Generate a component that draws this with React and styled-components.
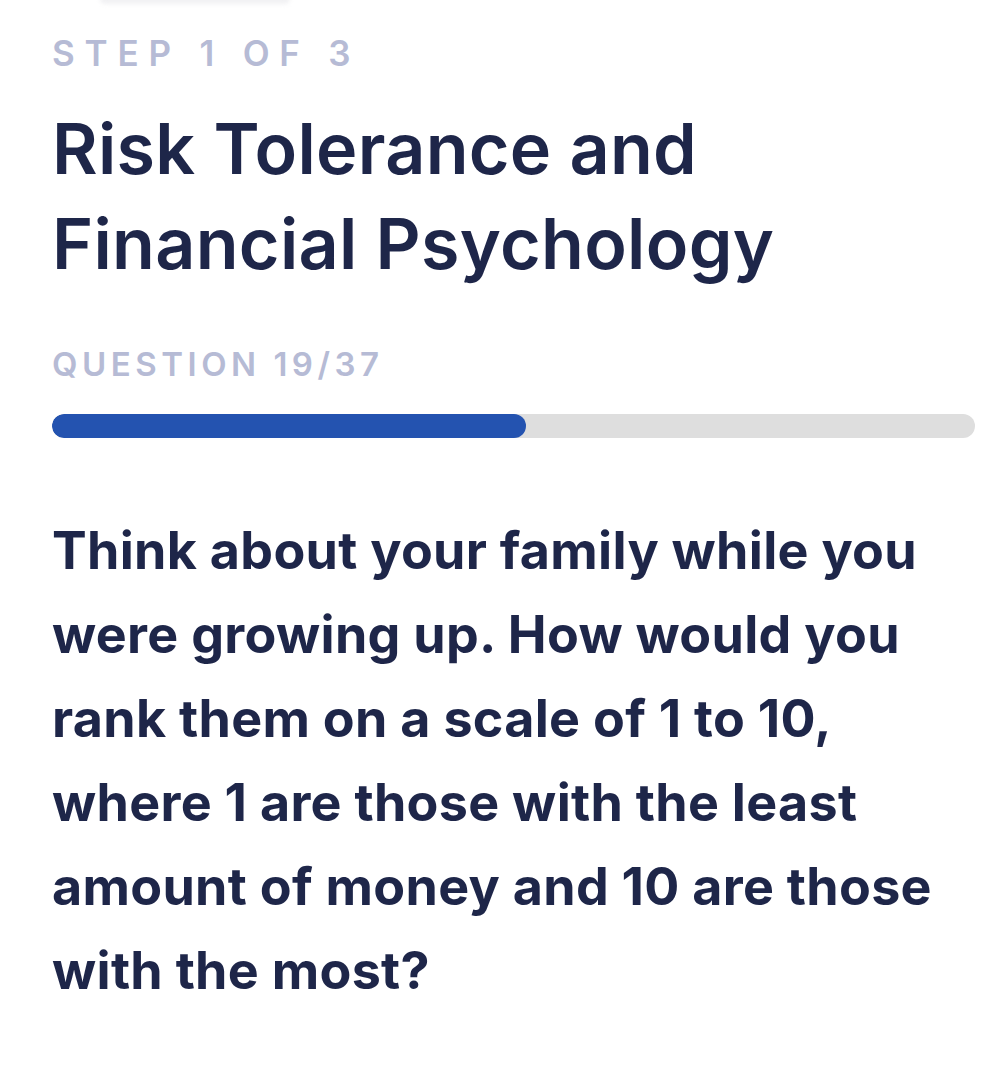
import React from 'react';
import styled, { createGlobalStyle } from 'styled-components';

const GlobalStyle = createGlobalStyle`
  body {
    margin: 0;
    background: #ffffff;
    font-family: Inter, "Noto Sans", sans-serif;
  }
`;

const Page = styled.div`
  position: relative;
  padding: 33px 25px 40px 52px;
  min-height: 1074px;
  box-sizing: border-box;
`;

const TopShade = styled.div`
  position: absolute;
  top: -6px;
  left: 100px;
  width: 190px;
  height: 10px;
  border-radius: 6px;
  background: #f1f1f3;
  filter: blur(2px);
`;

const Step = styled.div`
  font-size: 35px;
  line-height: 40px;
  font-weight: 600;
  letter-spacing: 9.8px;
  color: #b6bbd5;
`;

const Title = styled.h1`
  margin: 28px 0 0;
  font-size: 70px;
  line-height: 95px;
  font-weight: 600;
  letter-spacing: 0.3px;
  color: #1e2649;
`;

const Label = styled.div`
  margin-top: 53px;
  font-size: 33px;
  line-height: 40px;
  font-weight: 600;
  letter-spacing: 4.5px;
  color: #b6bbd5;
`;

const Track = styled.div`
  margin-top: 30px;
  height: 24px;
  border-radius: 12px;
  background: #dedede;
  overflow: hidden;
`;

const Fill = styled.div`
  height: 100%;
  border-radius: 12px;
  background: #2453b0;
`;

const Question = styled.p`
  margin: 71px 0 0;
  font-size: 52px;
  line-height: 84px;
  font-weight: 700;
  letter-spacing: 0.3px;
  color: #1e2649;
`;

export default function App() {
  const current = 19;
  const total = 37;
  return (
    <>
      <GlobalStyle />
      <Page>
        <TopShade />
        <Step>STEP 1 OF 3</Step>
        <Title>
          Risk Tolerance and
          <br />
          Financial Psychology
        </Title>
        <Label>QUESTION {current}/{total}</Label>
        <Track>
          <Fill style={{ width: `${(current / total) * 100}%` }} />
        </Track>
        <Question>
          Think about your family while you were growing up. How would you
          rank them on a scale of 1 to 10, where 1 are those with the least
          amount of money and 10 are those with the most?
        </Question>
      </Page>
    </>
  );
}
